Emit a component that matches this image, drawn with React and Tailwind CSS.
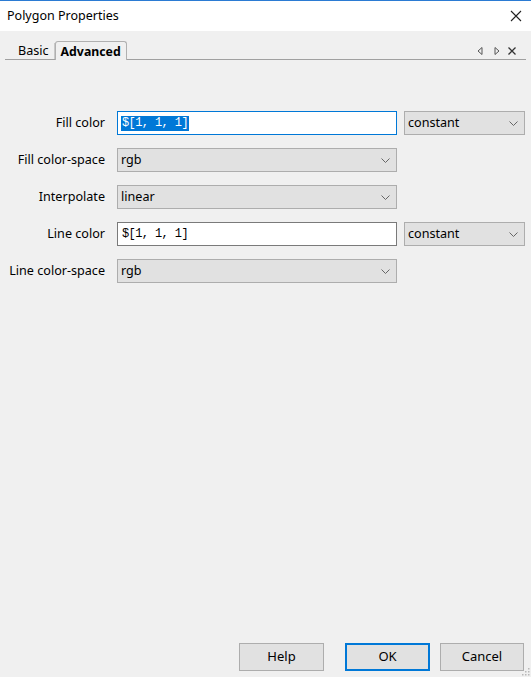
import React from "react";

const Chevron = () => (
    <svg width="9" height="5" viewBox="0 0 9 5" className="shrink-0">
        <path d="M0.5 0.5 L4.5 4.5 L8.5 0.5" fill="none" stroke="#666" strokeWidth="1" />
    </svg>
);

const Select = ({ value, width }) => (
    <div
        className={`flex items-center justify-between h-[24px] ${width} bg-[#e1e1e1] border border-[#adadad] pl-[3px] pr-[6px] text-[12.6px] text-black`}
    >
        <span>{value}</span>
        <Chevron />
    </div>
);

const Row = ({ label, children }) => (
    <div className="flex items-center h-[24px]">
        <div className="w-[105px] text-right text-[12.6px] text-black whitespace-nowrap">{label}</div>
        <div className="flex items-center ml-[12px]">{children}</div>
    </div>
);

const Btn = ({ children, primary, className = "" }) => (
    <button
        className={`h-[28px] text-[13px] text-black bg-[#e1e1e1] ${
            primary ? "border-2 border-[#0078d7]" : "border border-[#adadad]"
        } ${className}`}
    >
        {children}
    </button>
);

const mono = { fontFamily: '"Liberation Mono", monospace' };

const App = () => {
    return (
        <div
            className="relative w-[531px] h-[677px] flex flex-col bg-[#f0f0f0] overflow-hidden"
            style={{ fontFamily: '"Noto Sans", "Open Sans", sans-serif' }}
        >
            {/* title bar */}
            <div className="h-[31px] bg-white border-t border-[#2b7bd3] flex items-center justify-between pl-[7px] pr-[9px]">
                <span className="text-[12.5px] text-black">Polygon Properties</span>
                <svg width="12" height="12" viewBox="0 0 12 12">
                    <path d="M1 1 L11 11 M11 1 L1 11" stroke="#222" strokeWidth="1.1" />
                </svg>
            </div>

            {/* tabs */}
            <div className="mt-[10px] mx-[5px] flex items-end justify-between border-b border-[#a0a0a0] h-[19px]">
                <div className="flex items-end h-full pl-[8px]">
                    <div className="px-[5px] h-[16px] flex items-center text-[12.6px] text-black border-r border-[#c8c8c8]">
                        Basic
                    </div>
                    <div className="h-[19px] -mb-px px-[5px] pt-[2px] flex items-center text-[12.3px] font-bold text-black bg-[#f0f0f0] border border-b-0 border-[#b0b0b0] rounded-t-[3px]">
                        Advanced
                    </div>
                </div>
                <div className="flex items-center pr-[10px] pb-[4px]">
                    <svg width="6" height="8" viewBox="0 0 6 8">
                        <path d="M5 0.5 L1 4 L5 7.5 Z" fill="none" stroke="#555" strokeWidth="1" />
                    </svg>
                    <svg width="6" height="8" viewBox="0 0 6 8" className="ml-[11px]">
                        <path d="M1 0.5 L5 4 L1 7.5 Z" fill="none" stroke="#555" strokeWidth="1" />
                    </svg>
                    <svg width="8" height="8" viewBox="0 0 8 8" className="ml-[8px]">
                        <path d="M0.5 0.5 L7.5 7.5 M7.5 0.5 L0.5 7.5" stroke="#333" strokeWidth="1.3" />
                    </svg>
                </div>
            </div>

            {/* form */}
            <div className="mt-[51px] flex flex-col gap-[13px]">
                <Row label="Fill color">
                    <div className="w-[280px] h-[24px] bg-white border border-[#0078d7] flex items-center pl-[3px]">
                        <span
                            className="bg-[#0078d7] text-white text-[12px] leading-[15px] tracking-[-0.6px] px-[1px]"
                            style={mono}
                        >
                            $[1, 1, 1]
                        </span>
                    </div>
                    <div className="ml-[7px]">
                        <Select value="constant" width="w-[121px]" />
                    </div>
                </Row>
                <Row label="Fill color-space">
                    <Select value="rgb" width="w-[280px]" />
                </Row>
                <Row label="Interpolate">
                    <Select value="linear" width="w-[280px]" />
                </Row>
                <Row label="Line color">
                    <div className="w-[280px] h-[24px] bg-white border border-[#7a7a7a] flex items-center pl-[4px]">
                        <span className="text-black text-[12px] leading-[15px] tracking-[-0.6px]" style={mono}>
                            $[1, 1, 1]
                        </span>
                    </div>
                    <div className="ml-[7px]">
                        <Select value="constant" width="w-[121px]" />
                    </div>
                </Row>
                <Row label="Line color-space">
                    <Select value="rgb" width="w-[280px]" />
                </Row>
            </div>

            <div className="flex-1" />

            {/* buttons */}
            <div className="flex justify-end items-center pr-[7px] pb-[6px]">
                <Btn className="w-[85px]">Help</Btn>
                <Btn primary className="w-[85px] ml-[21px]">OK</Btn>
                <Btn className="w-[84px] ml-[10px]">Cancel</Btn>
            </div>

            {/* size grip */}
            <svg width="8" height="8" viewBox="0 0 8 8" className="absolute right-[1px] bottom-[1px]">
                <rect x="6" y="0" width="1.5" height="1.5" fill="#b8b8b8" />
                <rect x="3" y="3" width="1.5" height="1.5" fill="#b8b8b8" />
                <rect x="6" y="3" width="1.5" height="1.5" fill="#b8b8b8" />
                <rect x="0" y="6" width="1.5" height="1.5" fill="#b8b8b8" />
                <rect x="3" y="6" width="1.5" height="1.5" fill="#b8b8b8" />
                <rect x="6" y="6" width="1.5" height="1.5" fill="#b8b8b8" />
            </svg>
        </div>
    );
};

export default App;
